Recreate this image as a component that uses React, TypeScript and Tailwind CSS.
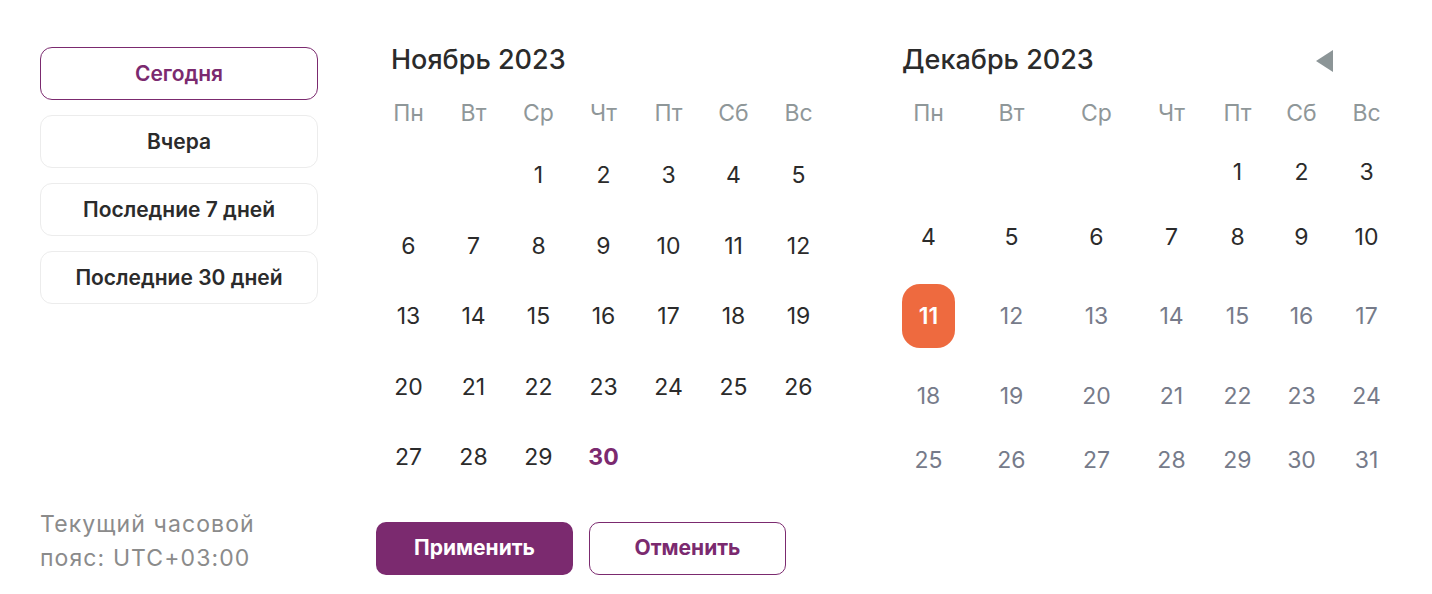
import React from "react";

const WEEKDAYS = ["Пн", "Вт", "Ср", "Чт", "Пт", "Сб", "Вс"];

const presets = [
    { label: "Сегодня", active: true },
    { label: "Вчера", active: false },
    { label: "Последние 7 дней", active: false },
    { label: "Последние 30 дней", active: false },
];

// November 2023 starts on Wednesday
const novCells: (number | null)[] = [null, null, ...Array.from({ length: 30 }, (_, i) => i + 1)];
// December 2023 starts on Friday
const decCells: (number | null)[] = [null, null, null, null, ...Array.from({ length: 31 }, (_, i) => i + 1)];

const chunk = (cells: (number | null)[]) => {
    const rows: (number | null)[][] = [];
    for (let i = 0; i < cells.length; i += 7) rows.push(cells.slice(i, i + 7));
    return rows;
};

const TODAY = 11;

const App = () => {
    return (
        <div
            className="w-[1432px] h-[594px] bg-white flex pl-[40px] pt-[32px]"
            style={{ fontFamily: "Inter, 'Noto Sans', sans-serif" }}
        >
            {/* presets */}
            <aside className="w-[278px] h-[543px] flex flex-col justify-between pt-[15px]">
                <div className="flex flex-col gap-[15px]">
                    {presets.map((p) => (
                        <button
                            key={p.label}
                            className={
                                p.active
                                    ? "h-[53px] rounded-[12px] border border-[#7b2a6f] text-[#7b2a6f] text-[21px] font-semibold"
                                    : "h-[53px] rounded-[12px] border border-[#ececec] text-[#2b2b2b] text-[21px] font-semibold"
                            }
                        >
                            {p.label}
                        </button>
                    ))}
                </div>
                <div className="text-[23px] leading-[34px] tracking-[1.1px] text-[#8b8b8b]">
                    Текущий часовой
                    <br />
                    пояс: UTC+03:00
                </div>
            </aside>

            <div className="ml-[58px] flex flex-col">
                <div className="flex">
                    {/* November */}
                    <section className="w-[455px]">
                        <div className="h-[54px] flex items-center pt-[3px] pl-[15px] text-[27px] font-medium text-[#2b2b2b]">
                            Ноябрь 2023
                        </div>
                        <div className="grid grid-cols-7 h-[54px] items-center text-center text-[23px] text-[#8f9799]">
                            {WEEKDAYS.map((d) => (
                                <div key={d}>{d}</div>
                            ))}
                        </div>
                        {chunk(novCells).map((row, ri) => (
                            <div key={ri} className="grid grid-cols-7 h-[70.5px] items-center text-center text-[23px] text-[#2b2b2b]">
                                {row.map((d, ci) => (
                                    <div
                                        key={ci}
                                        className={d === 30 ? "font-bold text-[#7b2a6f]" : ""}
                                    >
                                        {d ?? ""}
                                    </div>
                                ))}
                            </div>
                        ))}
                    </section>

                    {/* December */}
                    <section className="ml-[71px] w-[497px]">
                        <div className="h-[54px] flex items-center justify-between pt-[3px] text-[27px] font-medium text-[#2b2b2b]">
                            <span>Декабрь 2023</span>
                            <svg width="17" height="22" viewBox="0 0 17 22" className="mr-[66px]">
                                <path d="M17 0 L17 22 L0 11 Z" fill="#8c9597" />
                            </svg>
                        </div>
                        <div className="grid grid-cols-[83px_85px_75px_66px_64px_65px_59px] h-[54px] items-center text-[23px] text-[#8f9799]">
                            {WEEKDAYS.map((d) => (
                                <div key={d} className="w-[53px] text-center">
                                    {d}
                                </div>
                            ))}
                        </div>
                        <div className="grid grid-cols-[83px_85px_75px_66px_64px_65px_59px] grid-rows-[64px_66px_92px_68px_60px] items-center text-[23px]">
                            {decCells.map((d, i) => {
                                if (d === null) return <div key={i} />;
                                if (d === TODAY)
                                    return (
                                        <div
                                            key={i}
                                            className="w-[53px] h-[64px] rounded-[18px] bg-[#ee6a3f] text-white font-semibold flex items-center justify-center"
                                        >
                                            {d}
                                        </div>
                                    );
                                return (
                                    <div
                                        key={i}
                                        className={
                                            d < TODAY
                                                ? "w-[53px] text-center text-[#2b2b2b]"
                                                : "w-[53px] text-center text-[#767b8a]"
                                        }
                                    >
                                        {d}
                                    </div>
                                );
                            })}
                        </div>
                    </section>
                </div>

                <div className="flex gap-[16px] mt-[29px]">
                    <button className="w-[197px] h-[53px] rounded-[10px] bg-[#7b2a6f] text-white text-[21px] font-bold">
                        Применить
                    </button>
                    <button className="w-[197px] h-[53px] rounded-[10px] border border-[#7b2a6f] text-[#7b2a6f] text-[21px] font-bold">
                        Отменить
                    </button>
                </div>
            </div>
        </div>
    );
};

export default App;
